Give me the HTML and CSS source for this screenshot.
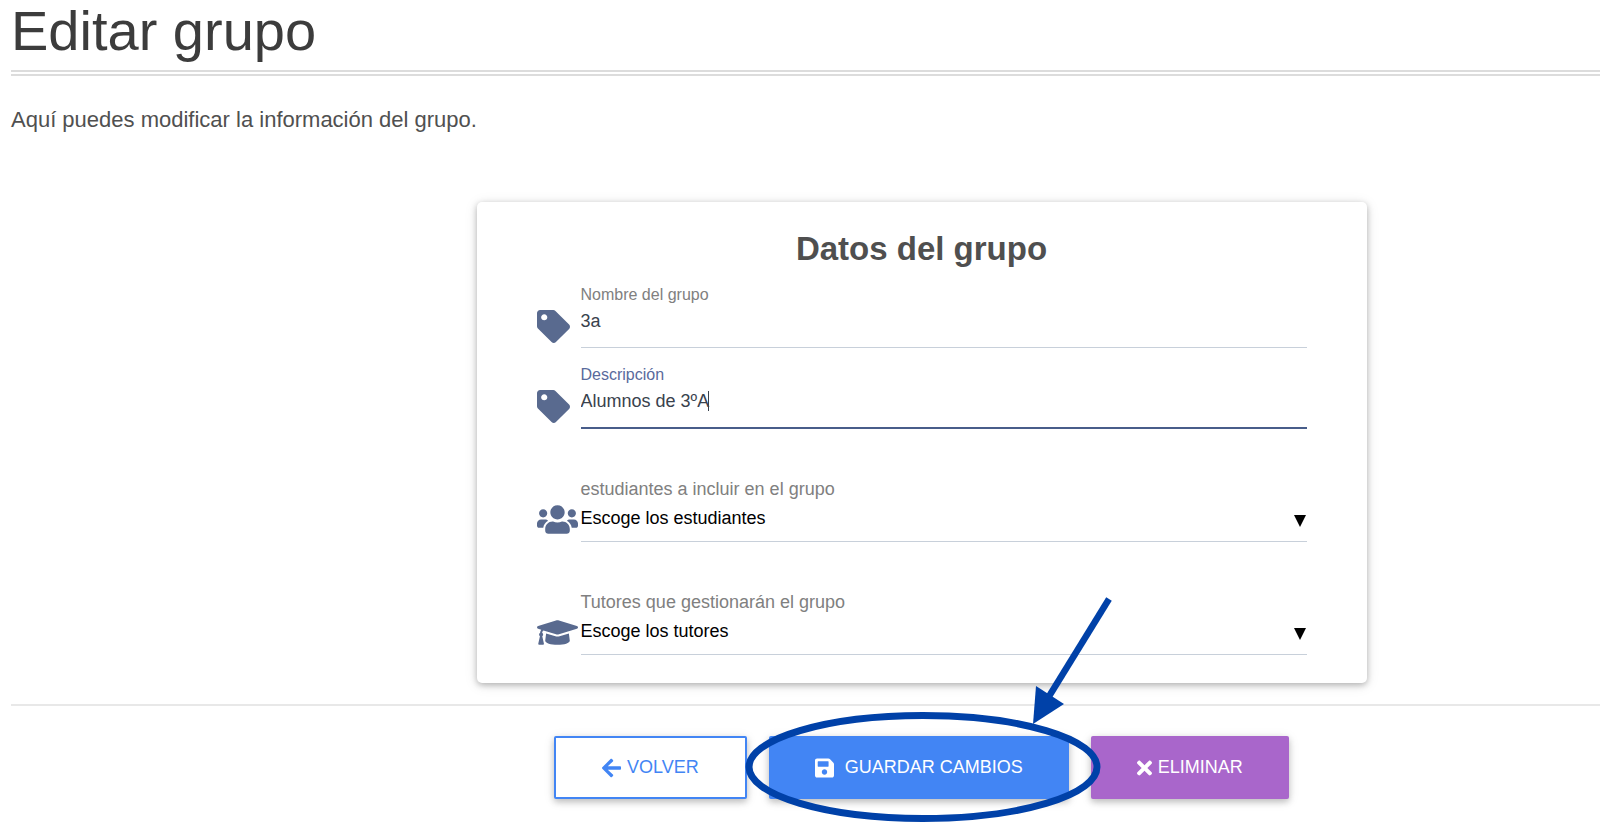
FILE: index.html
```html
<!DOCTYPE html>
<html lang="es">
<head>
  <meta charset="UTF-8">
  <meta name="viewport" content="width=device-width, initial-scale=1">
  <title>Editar grupo</title>
  <link rel="stylesheet" href="styles.css">
</head>
<body>
<main class="page">
  <h1 class="page-title">Editar grupo</h1>
  <p class="intro">Aquí puedes modificar la información del grupo.</p>

  <form class="group-form">
    <div class="content">
      <section class="card">
        <h2 class="card-title">Datos del grupo</h2>

        <div class="field">
          <svg class="icon icon-tag" viewBox="0 0 512 512" aria-hidden="true"><path d="M0 252.118V48C0 21.49 21.49 0 48 0h204.118a48 48 0 0 1 33.941 14.059l211.882 211.882c18.745 18.745 18.745 49.137 0 67.882L293.823 497.941c-18.745 18.745-49.137 18.745-67.882 0L14.059 286.059A48 48 0 0 1 0 252.118zM112 64c-26.51 0-48 21.49-48 48s21.49 48 48 48 48-21.49 48-48-21.49-48-48-48z"/></svg>
          <div class="field-body">
            <label class="label" for="nombre">Nombre del grupo</label>
            <input class="input" type="text" id="nombre" value="3a">
          </div>
        </div>

        <div class="field">
          <svg class="icon icon-tag" viewBox="0 0 512 512" aria-hidden="true"><path d="M0 252.118V48C0 21.49 21.49 0 48 0h204.118a48 48 0 0 1 33.941 14.059l211.882 211.882c18.745 18.745 18.745 49.137 0 67.882L293.823 497.941c-18.745 18.745-49.137 18.745-67.882 0L14.059 286.059A48 48 0 0 1 0 252.118zM112 64c-26.51 0-48 21.49-48 48s21.49 48 48 48 48-21.49 48-48-21.49-48-48-48z"/></svg>
          <div class="field-body">
            <label class="label label-active" for="descripcion">Descripción</label>
            <input class="input input-active" type="text" id="descripcion" value="Alumnos de 3ºA">
          </div>
        </div>

        <div class="field field-select">
          <svg class="icon icon-wide" viewBox="0 0 640 512" aria-hidden="true"><path d="M96 224c35.3 0 64-28.7 64-64s-28.7-64-64-64-64 28.7-64 64 28.7 64 64 64zm448 0c35.3 0 64-28.7 64-64s-28.7-64-64-64-64 28.7-64 64 28.7 64 64 64zm32 32h-64c-17.6 0-33.5 7.1-45.1 18.6 40.3 22.1 68.9 62 75.1 109.4h66c17.7 0 32-14.3 32-32v-32c0-35.3-28.7-64-64-64zm-256 0c61.9 0 112-50.1 112-112S381.9 32 320 32 208 82.1 208 144s50.1 112 112 112zm76.8 32h-8.3c-20.8 10-43.9 16-68.5 16s-47.6-6-68.5-16h-8.3C179.6 288 128 339.6 128 403.2V432c0 26.5 21.5 48 48 48h288c26.5 0 48-21.5 48-48v-28.8c0-63.6-51.6-115.2-115.2-115.2zm-223.7-13.4C161.5 263.1 145.6 256 128 256H64c-35.3 0-64 28.7-64 64v32c0 17.7 14.3 32 32 32h65.9c6.3-47.4 34.9-87.3 75.2-109.4z"/></svg>
          <div class="field-body">
            <label class="label" for="estudiantes">estudiantes a incluir en el grupo</label>
            <div class="select-wrap">
              <select class="select" id="estudiantes">
                <option>Escoge los estudiantes</option>
              </select>
            </div>
          </div>
        </div>

        <div class="field field-select">
          <svg class="icon icon-wide" viewBox="0 0 640 512" aria-hidden="true"><path d="M622.34 153.2L343.4 67.5c-15.2-4.67-31.6-4.67-46.79 0L17.66 153.2c-23.54 7.23-23.54 38.36 0 45.59l48.63 14.94c-10.67 13.19-17.23 29.28-17.88 46.9C38.78 266.15 32 276.11 32 288c0 10.78 5.68 19.85 13.86 25.65L20.33 428.53C18.11 438.52 25.71 448 35.94 448h56.11c10.24 0 17.84-9.48 15.62-19.47L82.14 313.65C90.32 307.85 96 298.78 96 288c0-11.57-6.47-21.25-15.66-26.87.76-15.02 8.44-28.3 20.69-36.72L296.6 284.5c9.06 2.78 26.44 6.25 46.79 0l278.95-85.7c23.55-7.24 23.55-38.36 0-45.6zM352.79 315.09c-28.53 8.76-52.84 3.92-65.59 0l-145.02-44.55L128 384c0 35.35 85.96 64 192 64s192-28.65 192-64l-14.18-113.47-145.03 44.56z"/></svg>
          <div class="field-body">
            <label class="label" for="tutores">Tutores que gestionarán el grupo</label>
            <div class="select-wrap">
              <select class="select" id="tutores">
                <option>Escoge los tutores</option>
              </select>
            </div>
          </div>
        </div>
      </section>
    </div>

    <hr class="divider">

    <div class="content">
      <div class="actions">
        <button class="btn btn-outline" type="button">
          <svg class="btn-icon" viewBox="0 0 448 512" aria-hidden="true"><path d="M257.5 445.1l-22.2 22.2c-9.4 9.4-24.6 9.4-33.9 0L7 273c-9.4-9.4-9.4-24.6 0-33.9L201.4 44.7c9.4-9.4 24.6-9.4 33.9 0l22.2 22.2c9.5 9.5 9.3 25-.4 34.3L136.6 216H424c13.3 0 24 10.7 24 24v32c0 13.3-10.7 24-24 24H136.6l120.5 114.8c9.8 9.3 10 24.8.4 34.3z"/></svg>
          Volver
        </button>
        <button class="btn btn-primary" type="submit">
          <svg class="btn-icon" viewBox="0 0 448 512" aria-hidden="true"><path d="M433.941 129.941l-83.882-83.882A48 48 0 0 0 316.118 32H48C21.49 32 0 53.49 0 80v352c0 26.51 21.49 48 48 48h352c26.51 0 48-21.49 48-48V163.882a48 48 0 0 0-14.059-33.941zM224 416c-35.346 0-64-28.654-64-64 0-35.346 28.654-64 64-64s64 28.654 64 64c0 35.346-28.654 64-64 64zm96-304.52V212c0 6.627-5.373 12-12 12H76c-6.627 0-12-5.373-12-12V108c0-6.627 5.373-12 12-12h228.52c3.183 0 6.235 1.264 8.485 3.515l3.48 3.48A11.996 11.996 0 0 1 320 111.48z"/></svg>
          Guardar cambios
        </button>
        <button class="btn btn-secondary" type="button">
          <svg class="btn-icon btn-icon-narrow" viewBox="0 0 352 512" aria-hidden="true"><path d="M242.72 256l100.07-100.07c12.28-12.28 12.28-32.19 0-44.48l-22.24-22.24c-12.28-12.28-32.19-12.28-44.48 0L176 189.28 75.93 89.21c-12.28-12.28-32.19-12.28-44.48 0L9.21 111.45c-12.28 12.28-12.28 32.19 0 44.48L109.28 256 9.21 356.07c-12.28 12.28-12.28 32.19 0 44.48l22.24 22.24c12.28 12.28 32.2 12.28 44.48 0L176 322.72l100.07 100.07c12.28 12.28 32.2 12.28 44.48 0l22.24-22.24c12.28-12.28 12.28-32.19 0-44.48L242.72 256z"/></svg>
          Eliminar
        </button>

        <!-- círculo y flecha que señalan el botón de guardar -->
        <svg class="marker" viewBox="0 0 370 233" aria-hidden="true">
          <ellipse cx="183" cy="177" rx="174" ry="51.5" fill="none" stroke="#0041a8" stroke-width="7"/>
          <path d="M369 9L308 108" stroke="#0041a8" stroke-width="6.5"/>
          <path d="M296 96L324 114L293 134z" fill="#0041a8"/>
        </svg>
      </div>
    </div>
  </form>
</main>
</body>
</html>
```

FILE: styles.css
```css
* {
  box-sizing: border-box;
}

body {
  margin: 0;
  background: #fff;
  color: #404040;
  font-family: "Liberation Sans", Arial, sans-serif;
  font-size: 18px;
}

.page {
  padding-left: 11px;
}

.page-title {
  margin: 0;
  padding-bottom: 8px;
  border-bottom: 6px double #dcdcdc;
  color: #3c3c3c;
  font-size: 56px;
  font-weight: 300;
  line-height: 62px;
}

.intro {
  margin: 28px 0 66px;
  color: #505050;
  font-size: 22px;
  font-weight: 300;
  line-height: 32px;
}

/* columna del formulario, desplazada a la derecha */
.content {
  display: flex;
  justify-content: center;
  padding-left: 232px;
}

/* tarjeta */
.card {
  width: 100%;
  max-width: 890px;
  padding: 24px 60px 28px;
  border-radius: 5px;
  background: #fff;
  box-shadow: 0 2px 6px rgba(0, 0, 0, 0.26), 0 2px 14px rgba(0, 0, 0, 0.1);
}

.card-title {
  margin: 0;
  color: #4f4f4f;
  font-size: 33px;
  line-height: 46px;
  text-align: center;
}

/* campos */
.field {
  display: grid;
  grid-template-columns: 44px 1fr;
  align-items: start;
  margin-top: 17px;
}

.card-title + .field {
  margin-top: 13px;
}

.field-select {
  margin-top: 49px;
}

.field-body {
  display: flex;
  flex-direction: column;
}

.icon {
  margin-top: 25px;
  fill: #596a8f;
}

.icon-tag {
  width: 33px;
  height: 33px;
}

.icon-wide {
  width: 41px;
  height: 33px;
}

.label {
  color: #808080;
  font-size: 16px;
  line-height: 20px;
}

.label-active {
  color: #596a9c;
}

.field-select .label {
  font-size: 18px;
  line-height: 22px;
}

.input {
  width: 100%;
  height: 43px;
  padding: 0 0 9px;
  border: 0;
  border-bottom: 1px solid #c8d0da;
  border-radius: 0;
  background: none;
  color: #39424d;
  font: inherit;
  outline: none;
}

.input-active {
  height: 44px;
  border-bottom: 2px solid #485d8a;
  /* cursor de texto */
  background: linear-gradient(#39424d, #39424d) 127px 6px / 1px 20px no-repeat;
}

.select-wrap {
  position: relative;
}

.select-wrap::after {
  content: "";
  position: absolute;
  top: 15px;
  right: 1px;
  border: 6px solid transparent;
  border-top: 12px solid #000;
  border-bottom: 0;
  pointer-events: none;
}

.select {
  display: block;
  width: 100%;
  height: 42px;
  padding: 0 20px 6px 0;
  border: 0;
  border-bottom: 1px solid #c8d0da;
  border-radius: 0;
  background: none;
  color: #000;
  font: inherit;
  appearance: none;
}

.divider {
  height: 2px;
  margin: 21px 0 30px;
  border: 0;
  background: #e8e8e8;
}

/* botones */
.actions {
  position: relative;
  display: flex;
  gap: 22px;
  padding-bottom: 24px;
}

.btn {
  display: flex;
  align-items: center;
  gap: 6px;
  height: 63px;
  padding: 0 46px;
  border: 0;
  border-radius: 2px;
  color: #fff;
  font: inherit;
  text-transform: uppercase;
  box-shadow: 0 3px 6px rgba(0, 0, 0, 0.2), 0 2px 12px rgba(0, 0, 0, 0.1);
  cursor: pointer;
}

.btn-outline {
  border: 2px solid #4285f4;
  background: #fff;
  color: #4285f4;
}

.btn-primary {
  gap: 11px;
  background: #4285f4;
}

.btn-secondary {
  background: #a966cb;
}

.btn-icon {
  width: 19px;
  height: 22px;
  fill: currentColor;
}

.btn-icon-narrow {
  width: 15px;
}

.marker {
  position: absolute;
  bottom: 0;
  left: calc(50% - 181px);
  width: 370px;
  height: 233px;
  overflow: visible;
  pointer-events: none;
}
```
